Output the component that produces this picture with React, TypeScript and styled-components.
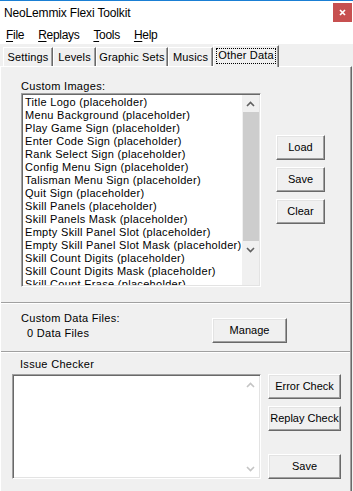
import React from "react";
import styled, { createGlobalStyle } from "styled-components";

const GlobalStyle = createGlobalStyle`
  html, body {
    margin: 0;
    padding: 0;
    background: #f0f0f0;
  }
  body {
    font-family: "Liberation Sans", Arial, sans-serif;
    font-size: 11px;
    color: #000;
    overflow: hidden;
  }
  * {
    box-sizing: border-box;
  }
`;

const images = [
  "Title Logo (placeholder)",
  "Menu Background (placeholder)",
  "Play Game Sign (placeholder)",
  "Enter Code Sign (placeholder)",
  "Rank Select Sign (placeholder)",
  "Config Menu Sign (placeholder)",
  "Talisman Menu Sign (placeholder)",
  "Quit Sign (placeholder)",
  "Skill Panels (placeholder)",
  "Skill Panels Mask (placeholder)",
  "Empty Skill Panel Slot (placeholder)",
  "Empty Skill Panel Slot Mask (placeholder)",
  "Skill Count Digits (placeholder)",
  "Skill Count Digits Mask (placeholder)",
  "Skill Count Erase (placeholder)",
];

const tabs = [
  { name: "Settings", width: 50 },
  { name: "Levels", width: 43 },
  { name: "Graphic Sets", width: 72 },
  { name: "Musics", width: 45 },
  { name: "Other Data", width: 66 },
];

const menus = ["File", "Replays", "Tools", "Help"];

export default function App() {
  return (
    <>
      <GlobalStyle />
      <Window>
        <TitleBar>
          <Title>NeoLemmix Flexi Toolkit</Title>
          <CloseButton>
            <svg width="7" height="7" viewBox="0 0 7 7">
              <path d="M1 1 L6 6 M6 1 L1 6" stroke="#fff" strokeWidth="1.7" />
            </svg>
          </CloseButton>
        </TitleBar>

        <MenuBar>
          {menus.map((m) => (
            <MenuItem key={m}>
              <u>{m[0]}</u>
              {m.slice(1)}
            </MenuItem>
          ))}
        </MenuBar>

        <TabStrip>
          {tabs.map((t) => (
            <Tab key={t.name} $width={t.width} $active={t.name === "Other Data"}>
              {t.name === "Other Data" ? <FocusBox>{t.name}</FocusBox> : t.name}
            </Tab>
          ))}
        </TabStrip>

        <TabPanel>
          <ImagesSection>
            <div>
              <Label>Custom Images:</Label>
              <ListBox $width={240} $height={194}>
                <ListItems>
                  {images.map((i) => (
                    <ListItem key={i}>{i}</ListItem>
                  ))}
                </ListItems>
                <ScrollBar>
                  <ArrowBox>
                    <Chevron up color="#606060" />
                  </ArrowBox>
                  <Thumb />
                  <ArrowBox>
                    <Chevron color="#606060" />
                  </ArrowBox>
                </ScrollBar>
              </ListBox>
            </div>
            <ButtonColumn $offset={55} $gap={7}>
              <Button $width={49}>Load</Button>
              <Button $width={49}>Save</Button>
              <Button $width={49}>Clear</Button>
            </ButtonColumn>
          </ImagesSection>

          <Separator />

          <DataSection>
            <DataText>
              <Label>Custom Data Files:</Label>
              <Count>0 Data Files</Count>
            </DataText>
            <Button $width={75} style={{ marginTop: 14 }}>
              Manage
            </Button>
          </DataSection>

          <Separator />

          <IssueSection>
            <IssueLabel>Issue Checker</IssueLabel>
            <IssueRow>
              <ListBox $width={249} $height={105}>
                <MemoArea />
                <ScrollBar $disabled>
                  <ArrowBox>
                    <Chevron up color="#c4c4c4" />
                  </ArrowBox>
                  <Track />
                  <ArrowBox>
                    <Chevron color="#c4c4c4" />
                  </ArrowBox>
                </ScrollBar>
              </ListBox>
              <IssueButtons>
                <Button $width={73}>Error Check</Button>
                <Button $width={73}>Replay Check</Button>
                <Button $width={73} style={{ marginTop: "auto" }}>
                  Save
                </Button>
              </IssueButtons>
            </IssueRow>
          </IssueSection>
        </TabPanel>
      </Window>
    </>
  );
}

function Chevron({ up, color }: { up?: boolean; color: string }) {
  return (
    <svg width="9" height="6" viewBox="0 0 9 6">
      <path
        d={up ? "M1 5 L4.5 1.5 L8 5" : "M1 1 L4.5 4.5 L8 1"}
        fill="none"
        stroke={color}
        strokeWidth="1.6"
      />
    </svg>
  );
}

const Window = styled.div`
  width: 353px;
  height: 491px;
  display: flex;
  flex-direction: column;
  background: #f0f0f0;
  overflow: hidden;
`;

const TitleBar = styled.div`
  height: 23px;
  flex-shrink: 0;
  border-top: 1px solid #1a7fd4;
  background: #fff;
  display: flex;
  justify-content: space-between;
  align-items: flex-start;
`;

const Title = styled.div`
  font-size: 12px;
  line-height: 14px;
  margin: 5px 0 0 4px;
  letter-spacing: -0.15px;
`;

const CloseButton = styled.div`
  width: 19px;
  height: 19px;
  margin: 2px 1px 0 0;
  background: #c75050;
  display: flex;
  align-items: center;
  justify-content: center;
`;

const MenuBar = styled.div`
  height: 21px;
  flex-shrink: 0;
  background: #fff;
  display: flex;
  align-items: flex-start;
`;

const MenuItem = styled.div`
  font-size: 12px;
  line-height: 14px;
  margin-top: 5px;
  padding: 0 7px;
  letter-spacing: -0.3px;
  &:first-child {
    padding-left: 6px;
  }
  u {
    text-underline-offset: 2px;
  }
`;

const TabStrip = styled.div`
  height: 22px;
  flex-shrink: 0;
  display: flex;
  align-items: flex-end;
  padding-left: 3px;
`;

const Tab = styled.div<{ $width: number; $active?: boolean }>`
  width: ${(p) => p.$width}px;
  height: ${(p) => (p.$active ? 22 : 19)}px;
  margin-bottom: ${(p) => (p.$active ? -1 : 0)}px;
  position: relative;
  z-index: ${(p) => (p.$active ? 1 : 0)};
  background: #f0f0f0;
  border-top: 1px solid #fff;
  border-left: 1px solid #fff;
  border-right: 1px solid #696969;
  box-shadow: inset -1px 0 #a0a0a0;
  display: flex;
  justify-content: center;
  align-items: flex-start;
  padding: ${(p) => (p.$active ? "2px 2px 2px 2px" : "3px 0 0 0")};
  line-height: 13px;
  letter-spacing: 0.15px;
  white-space: nowrap;
`;

const FocusBox = styled.div`
  flex: 1;
  height: 16px;
  border: 1px dotted #000;
  text-align: center;
  line-height: 13px;
`;

const TabPanel = styled.div`
  flex: 1;
  width: 352px;
  display: flex;
  flex-direction: column;
  border-top: 1px solid #fff;
  border-left: 1px solid #fff;
  border-right: 1px solid #696969;
  box-shadow: inset -1px 0 #a0a0a0;
`;

const Separator = styled.div`
  height: 2px;
  flex-shrink: 0;
  margin-right: 1px;
  border-top: 1px solid #a0a0a0;
  border-bottom: 1px solid #fff;
`;

const ImagesSection = styled.div`
  display: flex;
  align-items: flex-start;
  padding: 13px 0 15px 20px;
`;

const Label = styled.div`
  line-height: 13px;
  letter-spacing: 0.3px;
  white-space: nowrap;
`;

const ListBox = styled.div<{ $width: number; $height: number }>`
  width: ${(p) => p.$width}px;
  height: ${(p) => p.$height}px;
  flex-shrink: 0;
  display: flex;
  background: #fff;
  border-top: 1px solid #a0a0a0;
  border-left: 1px solid #a0a0a0;
  border-right: 1px solid #fff;
  border-bottom: 1px solid #fff;
  box-shadow: inset 1px 1px #696969, inset -1px -1px #e3e3e3;
  padding: 1px;
`;

const ListItems = styled.div`
  flex: 1;
  overflow: hidden;
  padding: 1px 0 0 2px;
`;

const ListItem = styled.div`
  line-height: 13px;
  letter-spacing: 0.3px;
  white-space: nowrap;
`;

const MemoArea = styled.div`
  flex: 1;
`;

const ScrollBar = styled.div<{ $disabled?: boolean }>`
  width: 17px;
  flex-shrink: 0;
  display: flex;
  flex-direction: column;
  background: ${(p) => (p.$disabled ? "#fff" : "#f0f0f0")};
`;

const ArrowBox = styled.div`
  height: 17px;
  flex-shrink: 0;
  display: flex;
  align-items: center;
  justify-content: center;
`;

const Thumb = styled.div`
  height: 129px;
  margin: 0 0 0 1px;
  background: #cdcdcd;
`;

const Track = styled.div`
  flex: 1;
`;

const ButtonColumn = styled.div<{ $offset: number; $gap: number }>`
  display: flex;
  flex-direction: column;
  gap: ${(p) => p.$gap}px;
  margin: ${(p) => p.$offset}px 0 0 15px;
`;

const Button = styled.div<{ $width: number }>`
  width: ${(p) => p.$width}px;
  height: 25px;
  flex-shrink: 0;
  display: flex;
  align-items: center;
  justify-content: center;
  background: #f0f0f0;
  border-top: 1px solid #fff;
  border-left: 1px solid #fff;
  border-right: 1px solid #696969;
  border-bottom: 1px solid #696969;
  box-shadow: inset -1px -1px #a0a0a0, inset 1px 1px #e3e3e3;
  white-space: nowrap;
  line-height: 13px;
`;

const DataSection = styled.div`
  height: 47px;
  flex-shrink: 0;
  display: flex;
  align-items: flex-start;
  padding-left: 20px;
`;

const DataText = styled.div`
  width: 191px;
  margin-top: 8px;
  display: flex;
  flex-direction: column;
  gap: 2px;
`;

const Count = styled.div`
  line-height: 13px;
  letter-spacing: 0.3px;
  padding-left: 6px;
`;

const IssueSection = styled.div`
  flex: 1;
  padding: 5px 0 0 11px;
`;

const IssueLabel = styled.div`
  line-height: 13px;
  letter-spacing: 0.3px;
  margin: 0 0 3px 8px;
`;

const IssueRow = styled.div`
  display: flex;
  align-items: flex-start;
`;

const IssueButtons = styled.div`
  height: 105px;
  display: flex;
  flex-direction: column;
  gap: 7px;
  margin-left: 7px;
`;
